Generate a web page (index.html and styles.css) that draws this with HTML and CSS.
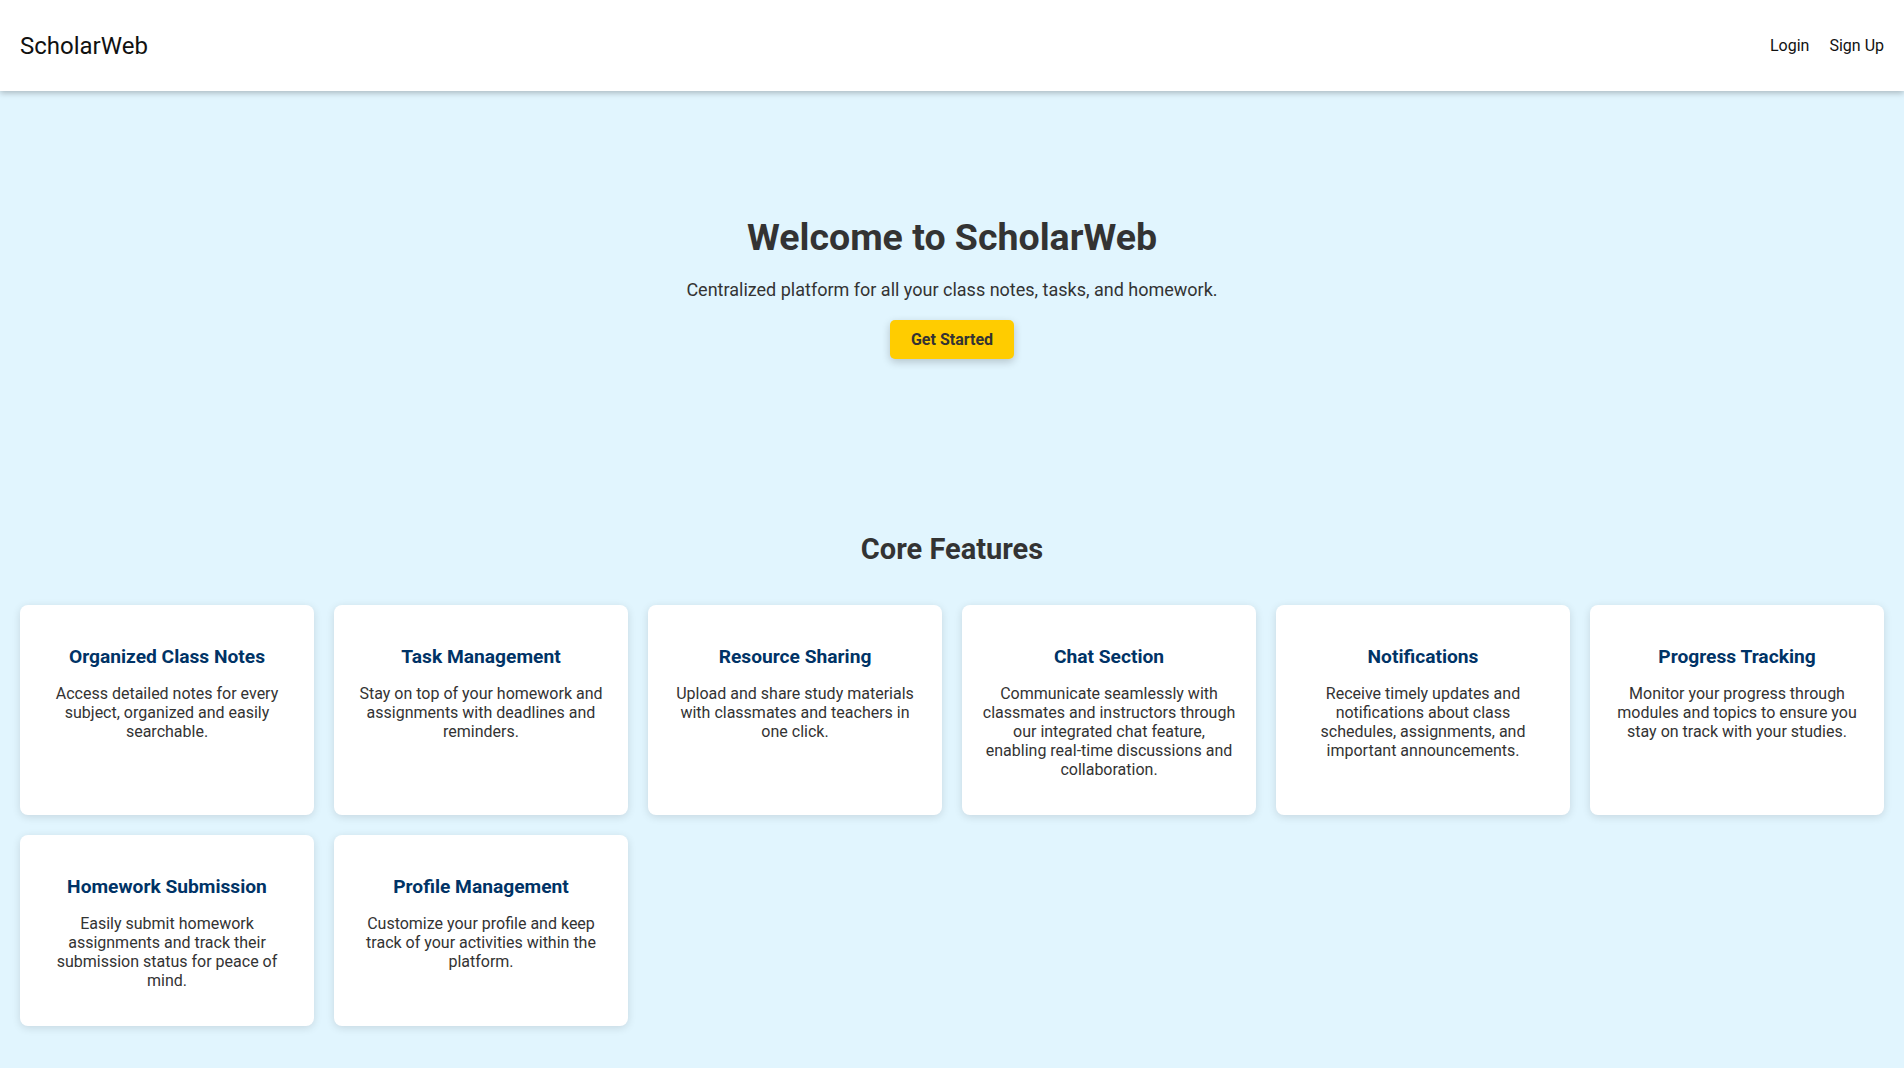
FILE: index.html
```html
<!DOCTYPE html>
<html lang="en">
<head>
  <meta charset="UTF-8" />
  <meta name="viewport" content="width=device-width, initial-scale=1.0" />
  <title>ScholarWeb</title>
  <link rel="stylesheet" href="styles.css">
</head>
<body>
  <header class="topbar">
    <div class="logo">ScholarWeb</div>
    <nav class="nav">
      <a href="#">Login</a>
      <a href="#">Sign Up</a>
    </nav>
  </header>

  <section class="hero">
    <h1>Welcome to ScholarWeb</h1>
    <p>Centralized platform for all your class notes, tasks, and homework.</p>
    <button class="cta">Get Started</button>
  </section>

  <section class="features">
    <h2>Core Features</h2>
    <div class="grid">
      <div class="card">
        <h3>Organized Class Notes</h3>
        <p>Access detailed notes for every subject, organized and easily searchable.</p>
      </div>
      <div class="card">
        <h3>Task Management</h3>
        <p>Stay on top of your homework and assignments with deadlines and reminders.</p>
      </div>
      <div class="card">
        <h3>Resource Sharing</h3>
        <p>Upload and share study materials with classmates and teachers in one click.</p>
      </div>
      <div class="card">
        <h3>Chat Section</h3>
        <p>Communicate seamlessly with classmates and instructors through our integrated chat feature, enabling real-time discussions and collaboration.</p>
      </div>
      <div class="card">
        <h3>Notifications</h3>
        <p>Receive timely updates and notifications about class schedules, assignments, and important announcements.</p>
      </div>
      <div class="card">
        <h3>Progress Tracking</h3>
        <p>Monitor your progress through modules and topics to ensure you stay on track with your studies.</p>
      </div>
      <div class="card">
        <h3>Homework Submission</h3>
        <p>Easily submit homework assignments and track their submission status for peace of mind.</p>
      </div>
      <div class="card">
        <h3>Profile Management</h3>
        <p>Customize your profile and keep track of your activities within the platform.</p>
      </div>
    </div>
  </section>
</body>
</html>
```

FILE: styles.css
```css
body { margin: 0; font-family: Roboto, "Liberation Sans", sans-serif; background: #e1f5fe; color: #333; }

.topbar { height: 91px; background: #fff; display: flex; align-items: center; justify-content: space-between; padding: 0 20px; box-shadow: 0 2px 6px rgba(0, 0, 0, 0.25); position: relative; }
.logo { font-size: 24px; color: #111; }
.nav { display: flex; gap: 20px; }
.nav a { color: #111; text-decoration: none; font-size: 16px; }

.hero { text-align: center; padding: 124px 20px 173px; }
.hero h1 { margin: 0 0 20px; font-size: 37.5px; font-weight: 700; color: #333; }
.hero p { margin: 0 0 20px; font-size: 18px; color: #333; }
.cta { height: 39px; padding: 0 21px; background: #ffcc00; color: #333; border: none; border-radius: 5px; font-family: inherit; font-size: 16px; font-weight: 700; box-shadow: 0 3px 8px rgba(0, 0, 0, 0.2); cursor: pointer; }

.features { padding: 0 20px 40px; }
.features h2 { text-align: center; margin: 0 0 39px; font-size: 29px; font-weight: 700; color: #333; }
.grid { display: grid; grid-template-columns: repeat(6, 1fr); gap: 20px; }
.card { background: #fff; border-radius: 8px; padding: 20px; text-align: center; box-shadow: 0 2px 8px rgba(0, 0, 0, 0.12); }
.card h3 { margin: 20px 0 10px; font-size: 19.2px; font-weight: 700; color: #003366; }
.card p { margin: 16px 0; font-size: 16px; color: #333; }
```
